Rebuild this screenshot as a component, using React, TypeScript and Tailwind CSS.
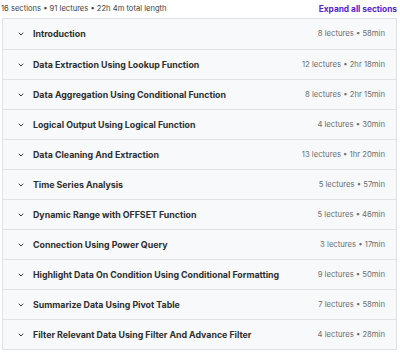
import { ChevronDown } from "lucide-react";

const sections = [
  { title: "Introduction", meta: "8 lectures • 58min" },
  { title: "Data Extraction Using Lookup Function", meta: "12 lectures • 2hr 18min" },
  { title: "Data Aggregation Using Conditional Function", meta: "8 lectures • 2hr 15min" },
  { title: "Logical Output Using Logical Function", meta: "4 lectures • 30min" },
  { title: "Data Cleaning And Extraction", meta: "13 lectures • 1hr 20min" },
  { title: "Time Series Analysis", meta: "5 lectures • 57min" },
  { title: "Dynamic Range with OFFSET Function", meta: "5 lectures • 46min" },
  { title: "Connection Using Power Query", meta: "3 lectures • 17min" },
  { title: "Highlight Data On Condition Using Conditional Formatting", meta: "9 lectures • 50min" },
  { title: "Summarize Data Using Pivot Table", meta: "7 lectures • 58min" },
  { title: "Filter Relevant Data Using Filter And Advance Filter", meta: "4 lectures • 28min" },
];

export default function App() {
  return (
    <div className="w-[400px] h-[352px] overflow-hidden bg-white font-['Inter',sans-serif] text-[#2d2f31]">
      <div className="flex items-center justify-between h-[18px] pl-[1px] pr-[3px]">
        <span className="text-[7.6px] text-[#3e4143]">16 sections • 91 lectures • 22h 4m total length</span>
        <button className="text-[8.3px] font-bold text-[#5624d0]">Expand all sections</button>
      </div>
      <div className="mx-[2px] w-[395px] border border-[#dfe3e6]">
        {sections.map((s, i) => (
          <div
            key={i}
            className={`flex items-center justify-between h-[30px] bg-[#f7f9fa] pl-[14px] pr-[11px] ${i > 0 ? "border-t border-[#dfe3e6]" : ""}`}
          >
            <div className="flex items-center gap-[8px]">
              <ChevronDown className="w-[8px] h-[8px] text-[#2d2f31]" strokeWidth={2.8} />
              <span className="text-[8.8px] font-bold">{s.title}</span>
            </div>
            <span className="text-[7.7px] text-[#6a6f73]">{s.meta}</span>
          </div>
        ))}
      </div>
    </div>
  );
}
